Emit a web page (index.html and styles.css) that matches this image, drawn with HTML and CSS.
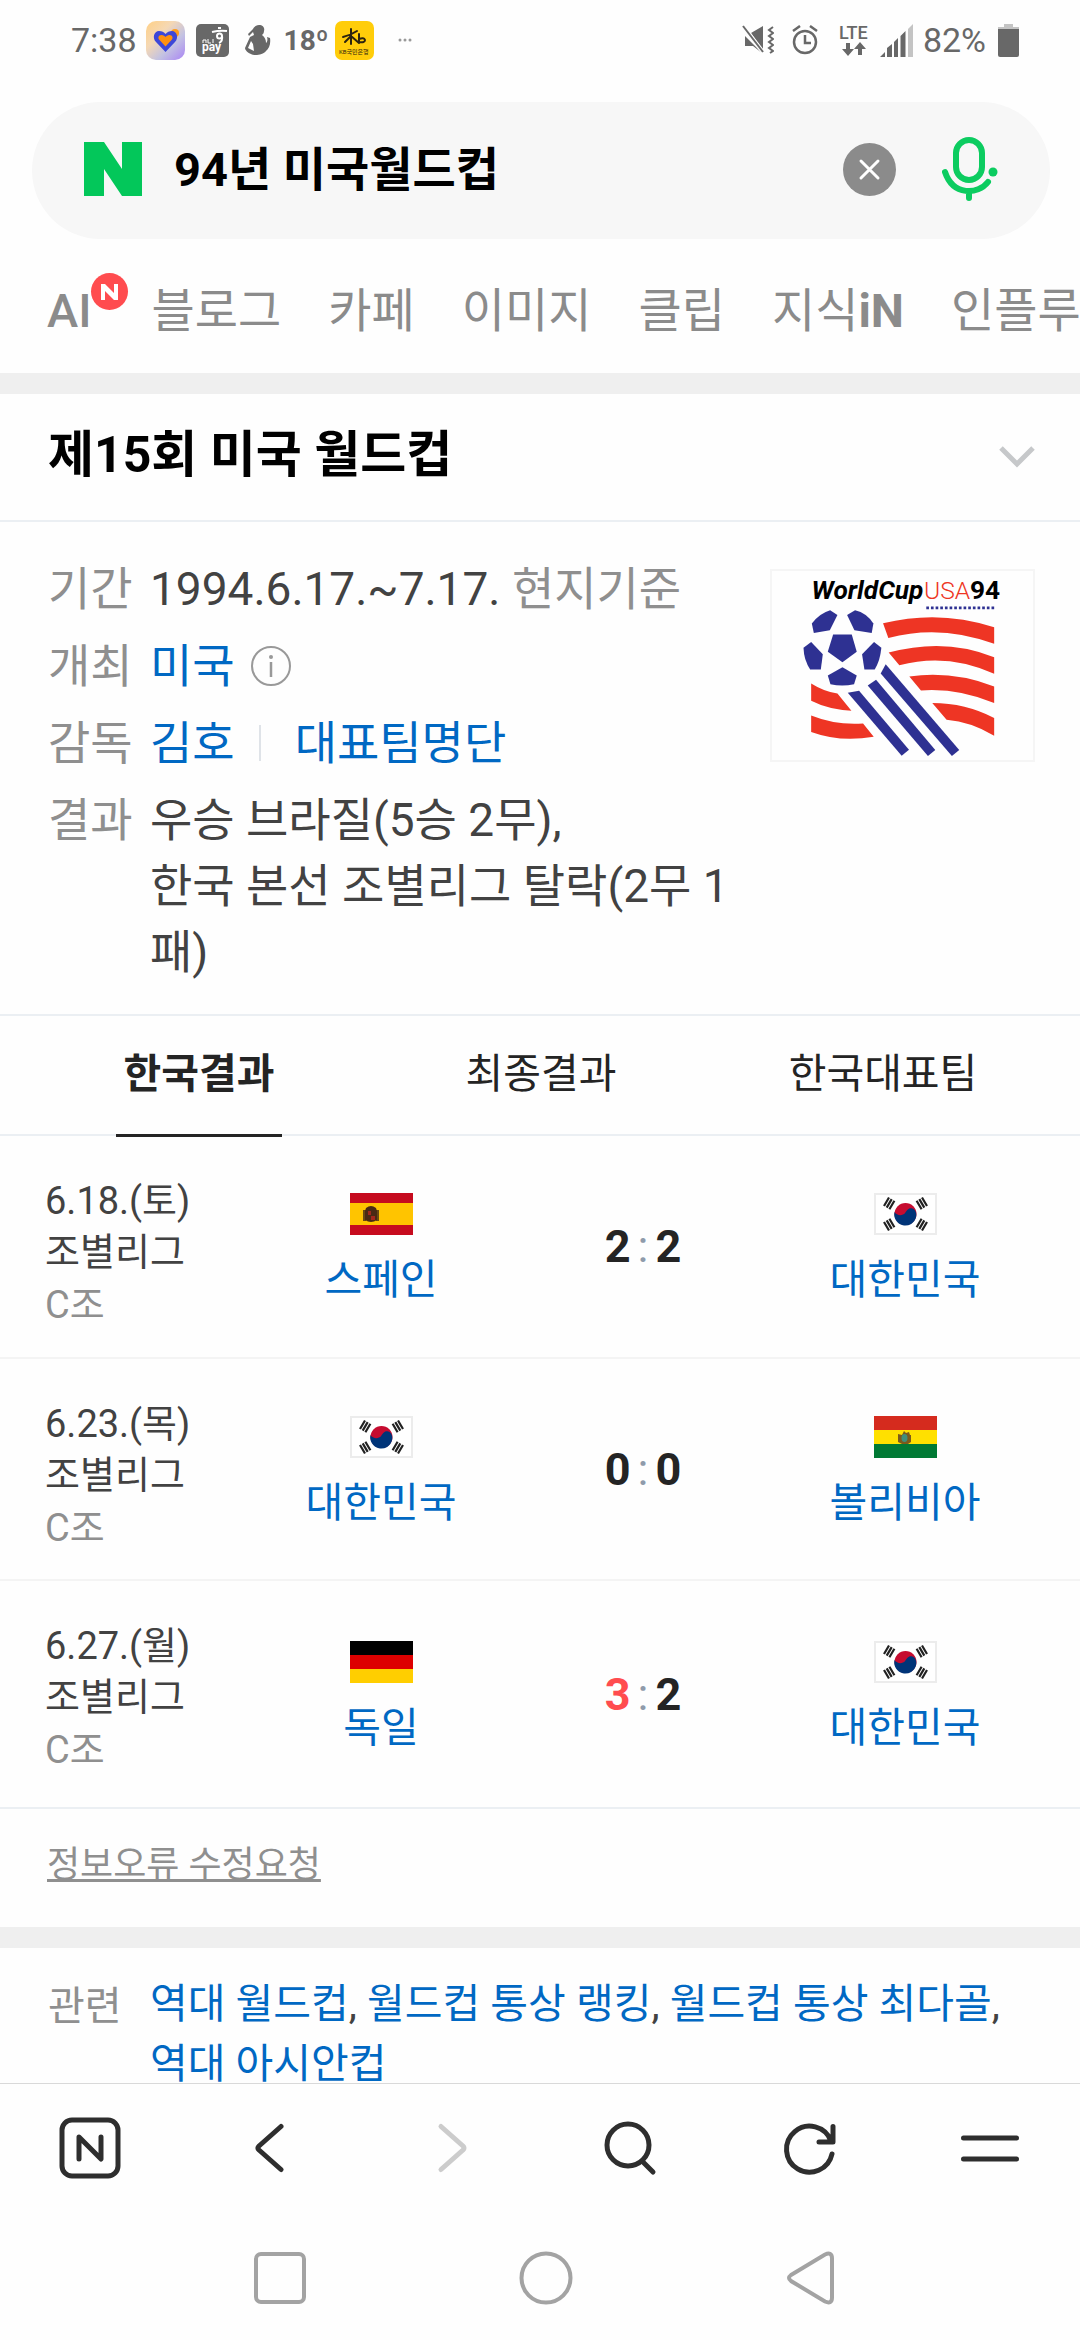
FILE: index.html
```html
<!DOCTYPE html>
<html lang="ko">
<head>
    <meta charset="UTF-8">
    <meta name="viewport" content="width=device-width, initial-scale=1.0">
    <title>94년 미국월드컵 : 네이버 검색</title>
    <link rel="stylesheet" href="styles.css">
</head>
<body>
    <!-- shared drawings -->
    <svg class="defs" width="0" height="0" aria-hidden="true">
        <symbol id="flag-kr" viewBox="0 0 63 42">
            <rect width="63" height="42" fill="#ececec"/>
            <rect x="2" y="2" width="59" height="38" fill="#fff"/>
            <circle cx="31.500" cy="21" r="11" fill="#c60c30"/>
            <path d="M20.500 19a11 11 0 0 0 21.600 5c1-4-1-8-4-8.500-4-.8-5 2-7 4.500-2.500 3-8 3-10.600-1z" fill="#003478"/>
            <g stroke="#222" stroke-width="2.200">
                <path d="M10 13l5-8.500M12.700 14.600l5-8.500M15.400 16.200l5-8.500"/>
                <path d="M53 13l-5-8.500M50.300 14.600l-5-8.500M47.600 16.200l-5-8.500"/>
                <path d="M10 29l5 8.500M12.700 27.400l5 8.500M15.400 25.800l5 8.500"/>
                <path d="M53 29l-5 8.500M50.300 27.400l-5 8.500M47.600 25.800l-5 8.500"/>
            </g>
        </symbol>
        <symbol id="flag-es" viewBox="0 0 63 42">
            <rect width="63" height="42" fill="#c60b1e"/>
            <rect y="10" width="63" height="22" fill="#ffc400"/>
            <path d="M13 17h3v11h-3zM26 17h3v11h-3z" fill="#6b4a12"/>
            <path d="M16 15q5-4 10 0l1 3v9q-6 4-12 0v-9z" fill="#4a2a14"/>
            <path d="M18 18h3v4h-3zM21 23h4v4h-4z" fill="#a3281c"/>
        </symbol>
        <symbol id="flag-bo" viewBox="0 0 63 42">
            <rect width="63" height="14" fill="#d52b1e"/>
            <rect y="14" width="63" height="14" fill="#ffe000"/>
            <rect y="28" width="63" height="14" fill="#007934"/>
            <path d="M24 18l4 1 2-4 2 2 3-1 1 3 1 0v7l-3 2h-6l-4-2z" fill="#7a5a1c"/>
            <ellipse cx="30.500" cy="22" rx="3" ry="4" fill="#3f8f7a"/>
        </symbol>
        <symbol id="flag-de" viewBox="0 0 63 42">
            <rect width="63" height="14" fill="#000"/>
            <rect y="14" width="63" height="14" fill="#d00"/>
            <rect y="28" width="63" height="14" fill="#ffce00"/>
        </symbol>
    </svg>

    <div class="app">
        <div class="status-bar">
            <div class="status-left">
                <span class="clock">7:38</span>
                <svg width="39" height="39" viewBox="0 0 39 39">
                    <defs>
                        <linearGradient id="appBg" x1="0" y1="0" x2="1" y2="1">
                            <stop offset="0" stop-color="#ffd085"/>
                            <stop offset=".35" stop-color="#f5d8b4"/>
                            <stop offset=".65" stop-color="#c3c2e2"/>
                            <stop offset="1" stop-color="#a984f5"/>
                        </linearGradient>
                    </defs>
                    <rect width="39" height="39" rx="10" fill="url(#appBg)"/>
                    <circle cx="29" cy="12" r="4" fill="#ff9d1c"/>
                    <path d="M19.500 31L10 21c-4-4-2-11 3-11 3 0 5 1 6.500 3 1.500-2 4-3 6.500-3 5 0 7 7 3 11z" fill="#3d47d8"/>
                    <path d="M19.500 25.500l-6-6.500c-2-2-1-5 2-5 2 0 3 1 4 2 1-1 2-2 4-2 3 0 4 3 2 5z" fill="#ff9110"/>
                </svg>
                <svg class="pay-icon" width="33" height="33" viewBox="0 0 33 33">
                    <rect width="33" height="33" rx="5" fill="#686868"/>
                    <g fill="none" stroke="#fff" stroke-width="2">
                        <path d="M22 4h3M16 8q8-2 15-1"/>
                        <circle cx="23.500" cy="12" r="2.500"/>
                        <path d="M26 12q1 5-3 7"/>
                    </g>
                    <path d="M7 19v-3h3v3M12 15v4h3M17 15v4" fill="none" stroke="#fff"/>
                    <text x="6" y="27" class="pay-text">pay</text>
                </svg>
                <svg width="26" height="30" viewBox="0 0 26 30">
                    <path d="M14 0c4 0 6 3 5 6 0 2-1 3-2 4 3 2 4 5 4 8 1-1 2-3 1-6l3 1c1 6-1 11-4 13-3 4-12 5-15 3-3-1-6-4-6-6l5-11 4-2-1-3-4 4-1-2 5-5c1-2 3-4 6-4zM6 16l-3 7 6 3-1-7z" fill="#686868" fill-rule="evenodd"/>
                </svg>
                <span class="temp">18º</span>
                <svg width="39" height="39" viewBox="0 0 39 39">
                    <rect width="39" height="39" rx="7" fill="#ffcd0a"/>
                    <path d="M8 16q8-2 14-6M16 8v15M16 15l-6 6M16 15l8 7M24 13v8q6 1 6-2-1-3-6-1" fill="none" stroke="#2b2410" stroke-width="2" stroke-linecap="round"/>
                    <text x="4" y="33" class="kb-text">KB국민은행</text>
                </svg>
                <svg class="more-dots" width="14" height="4" viewBox="0 0 14 4"><g fill="#999"><circle cx="2" cy="2" r="1.500"/><circle cx="7" cy="2" r="1.500"/><circle cx="12" cy="2" r="1.500"/></g></svg>
            </div>
            <div class="status-right">
                <svg width="32" height="30" viewBox="0 0 32 30">
                    <path d="M9 8L21 1v24zM3 11v10h8l9 7z" fill="#686868"/>
                    <path d="M1 1l20 26" stroke="#fefefe" stroke-width="4"/>
                    <path d="M1 1l20 26" stroke="#686868" stroke-width="2"/>
                    <path d="M31 2l-4 3 4 3-4 3 4 3-4 3 4 3-4 3 4 3-3 2" fill="none" stroke="#686868" stroke-width="2"/>
                </svg>
                <svg class="alarm-icon" width="26" height="30" viewBox="0 0 26 30">
                    <circle cx="13" cy="17" r="11" fill="none" stroke="#686868" stroke-width="2.500"/>
                    <path d="M13 10v8h6M1 6l7-5M25 6l-7-5" fill="none" stroke="#686868" stroke-width="2.500"/>
                </svg>
                <svg class="lte-icon" width="36" height="34" viewBox="0 0 36 34">
                    <text x="1" y="16" class="lte-text">LTE</text>
                    <path d="M8 20h4v6h4l-6 7-6-7h4zM20 32h4v-6h4l-6-7-6 7h4z" fill="#686868"/>
                </svg>
                <svg width="33" height="33" viewBox="0 0 33 33">
                    <path d="M0 33l5-5v5zM7 33v-9l5-4v13zM14 33v-15l4-4v19zM20.500 33v-21l5-5v26z" fill="#686868"/>
                    <path d="M28 33v-28l5-5v33z" fill="#c4c4c4"/>
                </svg>
                <span class="battery-text">82%</span>
                <svg width="21" height="33" viewBox="0 0 21 33">
                    <path d="M6 0h9v3h6v2H0V3h6z" fill="#c4c4c4"/>
                    <path d="M0 5h21v26q0 2-2 2H2q-2 0-2-2z" fill="#686868"/>
                </svg>
            </div>
        </div>

        <main class="content">
            <form class="search-box" role="search">
                <a href="#" aria-label="NAVER">
                    <svg width="58" height="54" viewBox="0 0 58 54"><path d="M0 0h20l18 27V0h20v54H38L20 27v27H0z" fill="#03c75a"/></svg>
                </a>
                <input class="search-input" type="text" value="94년 미국월드컵" aria-label="검색어">
                <button type="reset" aria-label="지우기">
                    <svg width="53" height="53" viewBox="0 0 53 53">
                        <circle cx="26.500" cy="26.500" r="26.500" fill="#8b8b8b"/>
                        <path d="M18 18l17 17M35 18L18 35" stroke="#fff" stroke-width="3" stroke-linecap="round"/>
                    </svg>
                </button>
                <button type="button" aria-label="음성검색">
                    <svg width="56" height="64" viewBox="0 0 56 64">
                        <g fill="none" stroke="#0ccc60" stroke-width="6" stroke-linecap="round">
                            <rect x="14" y="3" width="26" height="40" rx="13"/>
                            <path d="M3 35c8 24 33 23 43 10M27 54v7"/>
                        </g>
                        <circle cx="51" cy="35" r="4.500" fill="#0ccc60"/>
                    </svg>
                </button>
            </form>

            <nav class="category-tabs">
                <a class="ai-tab" href="#">AI<span class="new-badge"><svg width="17" height="16" viewBox="0 0 17 16"><path d="M0 0h4l9 9V0h4v16h-4L4 7v9H0z" fill="#fff"/></svg></span></a>
                <a href="#">블로그</a>
                <a href="#">카페</a>
                <a href="#">이미지</a>
                <a href="#">클립</a>
                <a href="#">지식<b>iN</b></a>
                <a href="#">인플루</a>
            </nav>

            <section class="result-card">
                <header class="card-header">
                    <h2>제15회 미국 월드컵</h2>
                    <button type="button" aria-label="펼치기">
                        <svg width="36" height="22" viewBox="0 0 36 22"><path d="M2 2l16 16L34 2" fill="none" stroke="#c6c8ca" stroke-width="5"/></svg>
                    </button>
                </header>

                <div class="info">
                    <dl class="info-list">
                        <dt>기간</dt>
                        <dd>1994.6.17.~7.17. <span class="muted">현지기준</span></dd>
                        <dt>개최</dt>
                        <dd class="info-line">
                            <a href="#">미국</a>
                            <button class="info-button" type="button" aria-label="정보">
                                <svg width="40" height="40" viewBox="0 0 40 40">
                                    <circle cx="20" cy="20" r="19" fill="none" stroke="#999" stroke-width="2"/>
                                    <path d="M20 16v15" stroke="#999" stroke-width="2.500"/>
                                    <circle cx="20" cy="11" r="2" fill="#999"/>
                                </svg>
                            </button>
                        </dd>
                        <dt>감독</dt>
                        <dd class="info-line"><a href="#">김호</a><span class="bar"></span><a href="#">대표팀명단</a></dd>
                        <dt>결과</dt>
                        <dd>우승 브라질(5승 2무),<br>한국 본선 조별리그 탈락(2무 1패)</dd>
                    </dl>
                    <a class="poster" href="#" aria-label="WorldCup USA94">
                        <svg width="261" height="189" viewBox="97 93 781 568">
                            <text x="214" y="178" class="wc-bold wc-italic">WorldCup</text>
                            <text x="552" y="178" class="wc-usa">USA</text>
                            <text x="690" y="178" class="wc-bold">94</text>
                            <path d="M559 204h208" stroke="#2e3192" stroke-width="8" stroke-dasharray="8 6"/>
                            <g fill="#ee3524">
                                <path d="M429 250q170-42 334 12v50q-160-60-318-18z"/>
                                <path d="M446 338q170-46 317 14v50q-140-64-285-26z"/>
                                <path d="M508 410q130-18 255 30v50q-110-46-220-38z"/>
                                <path d="M577 490q100 0 186 45v53q-70-42-143-48z"/>
                                <path d="M213 431q40 25 79 30l42 52q-70-4-121-30z"/>
                                <path d="M213 527q75 30 156 24l32 40q-100 18-188-14z"/>
                            </g>
                            <g fill="#2e3192">
                                <path d="M215 251q22-30 55-40l22 14-23 46-48 8z"/>
                                <path d="M321 225l24-14q35 8 55 40l-5 28-52-8z"/>
                                <path d="M279 284h56l15 52-43 31-44-31z"/>
                                <path d="M190 324l23-18 35 37-6 46h-32q-19-28-20-65z"/>
                                <path d="M402 306l22 18q-4 40-20 65h-31l-7-46z"/>
                                <path d="M263 407l44-25 43 25-8 26q-36 8-71 0z"/>
                                <path d="M323 459l34-6 150 177-22 18z"/>
                                <path d="M383 437l25-17 178 211-22 18z"/>
                                <path d="M422 401l15-28 221 258-22 18z"/>
                            </g>
                        </svg>
                    </a>
                </div>

                <div class="result-tabs" role="tablist">
                    <button class="result-tab active" role="tab" aria-selected="true"><span>한국결과</span></button>
                    <button class="result-tab" role="tab" aria-selected="false"><span>최종결과</span></button>
                    <button class="result-tab" role="tab" aria-selected="false"><span>한국대표팀</span></button>
                </div>

                <table class="matches">
                    <tbody>
                        <tr>
                            <td class="match-date">6.18.(토)<br>조별리그<span class="group">C조</span></td>
                            <td class="team"><svg class="flag"><use href="#flag-es"/></svg><a href="#">스페인</a></td>
                            <td class="score">2<span class="colon">:</span>2</td>
                            <td class="team last"><svg class="flag"><use href="#flag-kr"/></svg><a href="#">대한민국</a></td>
                        </tr>
                        <tr>
                            <td class="match-date">6.23.(목)<br>조별리그<span class="group">C조</span></td>
                            <td class="team"><svg class="flag"><use href="#flag-kr"/></svg><a href="#">대한민국</a></td>
                            <td class="score">0<span class="colon">:</span>0</td>
                            <td class="team last"><svg class="flag"><use href="#flag-bo"/></svg><a href="#">볼리비아</a></td>
                        </tr>
                        <tr>
                            <td class="match-date">6.27.(월)<br>조별리그<span class="group">C조</span></td>
                            <td class="team"><svg class="flag"><use href="#flag-de"/></svg><a href="#">독일</a></td>
                            <td class="score"><span class="win">3</span><span class="colon">:</span>2</td>
                            <td class="team last"><svg class="flag"><use href="#flag-kr"/></svg><a href="#">대한민국</a></td>
                        </tr>
                    </tbody>
                </table>

                <div class="report"><a href="#">정보오류 수정요청</a></div>
            </section>

            <section class="related">
                <h3>관련</h3>
                <p><a href="#">역대 월드컵</a>, <a href="#">월드컵 통상 랭킹</a>, <a href="#">월드컵 통상 최다골</a>, <a href="#">역대 아시안컵</a></p>
            </section>
        </main>

        <nav class="toolbar">
            <button type="button" aria-label="네이버 홈">
                <svg width="62" height="62" viewBox="0 0 62 62"><rect x="3" y="3" width="56" height="56" rx="10"/><path d="M20 42V20l22 22V20"/></svg>
            </button>
            <button type="button" aria-label="뒤로">
                <svg width="62" height="62" viewBox="0 0 62 62"><path d="M42 9.500L20 29q-2 2 0 4l22 19.500"/></svg>
            </button>
            <button class="disabled" type="button" aria-label="앞으로">
                <svg width="62" height="62" viewBox="0 0 62 62"><path d="M22 9.500L44 29q2 2 0 4L22 52.500"/></svg>
            </button>
            <button type="button" aria-label="검색">
                <svg width="62" height="62" viewBox="0 0 62 62"><circle cx="29" cy="28" r="21"/><path d="M43 44l11 11"/></svg>
            </button>
            <button type="button" aria-label="새로고침">
                <svg width="62" height="62" viewBox="0 0 62 62"><path d="M53 37A23 23 0 1 1 52 24M54 9.500V25H40"/></svg>
            </button>
            <button type="button" aria-label="메뉴">
                <svg width="62" height="62" viewBox="0 0 62 62"><path d="M4.500 21h53M4.500 42h53"/></svg>
            </button>
        </nav>

        <nav class="system-nav">
            <button type="button" aria-label="최근 앱">
                <svg width="54" height="54" viewBox="0 0 54 54"><rect x="3" y="3" width="48" height="48" rx="5"/></svg>
            </button>
            <button type="button" aria-label="홈">
                <svg width="54" height="54" viewBox="0 0 54 54"><circle cx="27" cy="27" r="24.500"/></svg>
            </button>
            <button type="button" aria-label="뒤로 가기">
                <svg width="54" height="54" viewBox="0 0 54 54"><path d="M7 24L41 3.500q7-3 7 4v39q0 7-7 4L7 30q-4-3 0-6z"/></svg>
            </button>
        </nav>
    </div>
</body>
</html>
```
FILE: styles.css
```css
* {
    box-sizing: border-box;
}

body, html {
    margin: 0;
    padding: 0;
    height: 100%;
}

body {
    font-family: Roboto, 'Noto Sans CJK KR', sans-serif;
    color: #424242;
    background-color: #fefefe;
}

a {
    color: #0068c3;
    text-decoration: none;
}

button {
    border: none;
    padding: 0;
    background: none;
    color: inherit;
    font: inherit;
    cursor: pointer;
}

svg {
    display: block;
    flex-shrink: 0;
}

.defs {
    position: absolute;
}

.app {
    display: flex;
    flex-direction: column;
    height: 100vh;
    overflow: hidden;
}

/* status bar */

.status-bar {
    display: flex;
    justify-content: space-between;
    align-items: center;
    flex-shrink: 0;
    height: 80px;
    padding: 0 61px 0 71px;
    color: #686868;
    font-size: 34px;
}

.status-left, .status-right {
    display: flex;
    align-items: center;
}

.clock {
    margin-right: 9px;
}

.pay-icon {
    margin: 0 16px 0 11px;
}

.temp {
    margin: 0 6px 0 13px;
    font-size: 28px;
    font-weight: bold;
}

.more-dots {
    margin-left: 24px;
}

.pay-text {
    fill: #fff;
    font-size: 12px;
    font-weight: bold;
}

.kb-text {
    fill: #2b2410;
    font-size: 6px;
}

.alarm-icon {
    margin: 0 20px 0 18px;
}

.lte-icon {
    margin-right: 6px;
}

.lte-text {
    fill: #686868;
    font-size: 18px;
    font-weight: 500;
}

.battery-text {
    margin: 0 12px 0 10px;
}

/* search */

.content {
    flex: 1;
    min-height: 0;
    overflow: hidden;
}

.search-box {
    display: flex;
    align-items: center;
    gap: 46px;
    height: 137px;
    margin: 22px 30px 0 32px;
    padding: 0 52px 3px;
    border-radius: 69px;
    background-color: #f7f7f7;
}

.search-input {
    flex: 1;
    min-width: 0;
    margin-left: -14px;
    padding: 0 0 8px;
    border: none;
    outline: none;
    background: none;
    color: #000;
    font: bold 47px Roboto, 'Noto Sans CJK KR', sans-serif;
}

.category-tabs {
    display: flex;
    gap: 47px;
    height: 134px;
    padding: 0 47px;
    overflow: hidden;
    white-space: nowrap;
    font-size: 47px;
    line-height: 144px;
}

.category-tabs a {
    color: #8b8b8b;
}

.category-tabs b {
    font-weight: bold;
}

.category-tabs .ai-tab {
    display: flex;
    margin-right: -24px;
    font-weight: 500;
}

.new-badge {
    display: flex;
    justify-content: center;
    align-items: center;
    width: 37px;
    height: 37px;
    margin-top: 34px;
    border-radius: 50%;
    background-color: #ff4c4f;
}

/* result card */

.result-card {
    border-top: 21px solid #efefef;
    border-bottom: 21px solid #efefef;
}

.card-header {
    display: flex;
    justify-content: space-between;
    align-items: center;
    height: 128px;
    padding: 0 45px 0 48px;
    border-bottom: 2px solid #ebeff3;
}

.card-header h2 {
    margin: 0;
    padding-bottom: 14px;
    color: #000;
    font-size: 50px;
    font-weight: bold;
}

.info {
    display: flex;
    justify-content: space-between;
    align-items: flex-start;
    padding: 34px 45px 29px 48px;
    border-bottom: 2px solid #ebeff3;
}

.info-list {
    display: grid;
    grid-template-columns: 90px 1fr;
    column-gap: 12px;
    row-gap: 11px;
    flex: 1;
    margin: 0;
    font-size: 46px;
    line-height: 66px;
}

.info-list dt, .muted {
    color: #8f8f8f;
}

.info-list dd {
    margin: 0;
    word-break: break-all;
}

.info-list .info-line {
    display: flex;
    align-items: center;
}

.info-button {
    margin-left: 16px;
}

.bar {
    width: 2px;
    height: 36px;
    margin: 0 34px 0 24px;
    background-color: #dfe3e8;
}

.poster {
    margin-top: 13px;
    border: 2px solid #f5f5f5;
}

.wc-bold {
    font-size: 79px;
    font-weight: bold;
}

.wc-italic {
    font-style: italic;
}

.wc-usa {
    fill: #ee3524;
    font-size: 74px;
    font-weight: 300;
}

.result-tabs {
    display: flex;
    height: 120px;
    padding: 0 26px 0 28px;
    border-bottom: 2px solid #ebeff3;
    color: #242424;
    font-size: 41px;
}

.result-tab {
    display: flex;
    justify-content: center;
    flex: 1;
}

.result-tab span {
    height: 121px;
    padding: 0 8px;
    line-height: 116px;
}

.result-tab.active span {
    border-bottom: 3px solid #242424;
    font-weight: bold;
}

.matches {
    width: 100%;
    table-layout: fixed;
    border-collapse: collapse;
    font-size: 41px;
}

.matches tr {
    height: 222px;
    border-bottom: 2px solid #f4f4f4;
}

.matches tr:last-child {
    height: 228px;
    border-bottom-color: #ebeff3;
}

.matches td {
    padding: 0;
}

.matches .match-date {
    width: 250px;
    padding: 40px 0 0 45px;
    vertical-align: top;
    font-size: 38px;
    line-height: 51px;
}

.group {
    display: block;
    margin-top: 2px;
    color: #8f8f8f;
}

.matches .team {
    padding-top: 10px;
    text-align: center;
}

.matches .last {
    width: 306px;
    padding-right: 44px;
}

.team a {
    display: block;
    margin-top: 15px;
    line-height: 60px;
}

.flag {
    width: 63px;
    height: 42px;
    margin: 0 auto;
}

.score {
    text-align: center;
    color: #242424;
    font-size: 45px;
    font-weight: bold;
}

.colon {
    margin: 0 7px;
    color: #8f9bab;
    font-weight: normal;
}

.win {
    color: #ff4c4f;
}

.report {
    height: 118px;
    padding: 0 47px;
    font-size: 36px;
    line-height: 112px;
}

.report a {
    color: #8f8f8f;
    text-decoration: underline;
}

.related {
    display: flex;
    padding: 26px 48px;
    line-height: 60px;
}

.related h3 {
    flex-shrink: 0;
    width: 102px;
    margin: 0;
    color: #8f8f8f;
    font-size: 40px;
    font-weight: normal;
    line-height: 66px;
}

.related p {
    margin: 0;
    font-size: 41px;
}

/* bottom bars */

.toolbar {
    display: flex;
    flex-shrink: 0;
    height: 129px;
    border-top: 1px solid #d9d9d9;
}

.toolbar button {
    display: flex;
    justify-content: center;
    align-items: center;
    flex: 1;
}

.toolbar svg {
    fill: none;
    stroke: #2e2e2e;
    stroke-width: 5;
    stroke-linecap: round;
    stroke-linejoin: round;
}

.toolbar .disabled svg {
    stroke: #cccccc;
}

.system-nav {
    display: flex;
    flex-shrink: 0;
    height: 128px;
    padding: 4px 136px 0 147px;
}

.system-nav button {
    display: flex;
    justify-content: center;
    align-items: center;
    flex: 1;
}

.system-nav svg {
    fill: none;
    stroke: #a3a3a3;
    stroke-width: 4;
}
```
